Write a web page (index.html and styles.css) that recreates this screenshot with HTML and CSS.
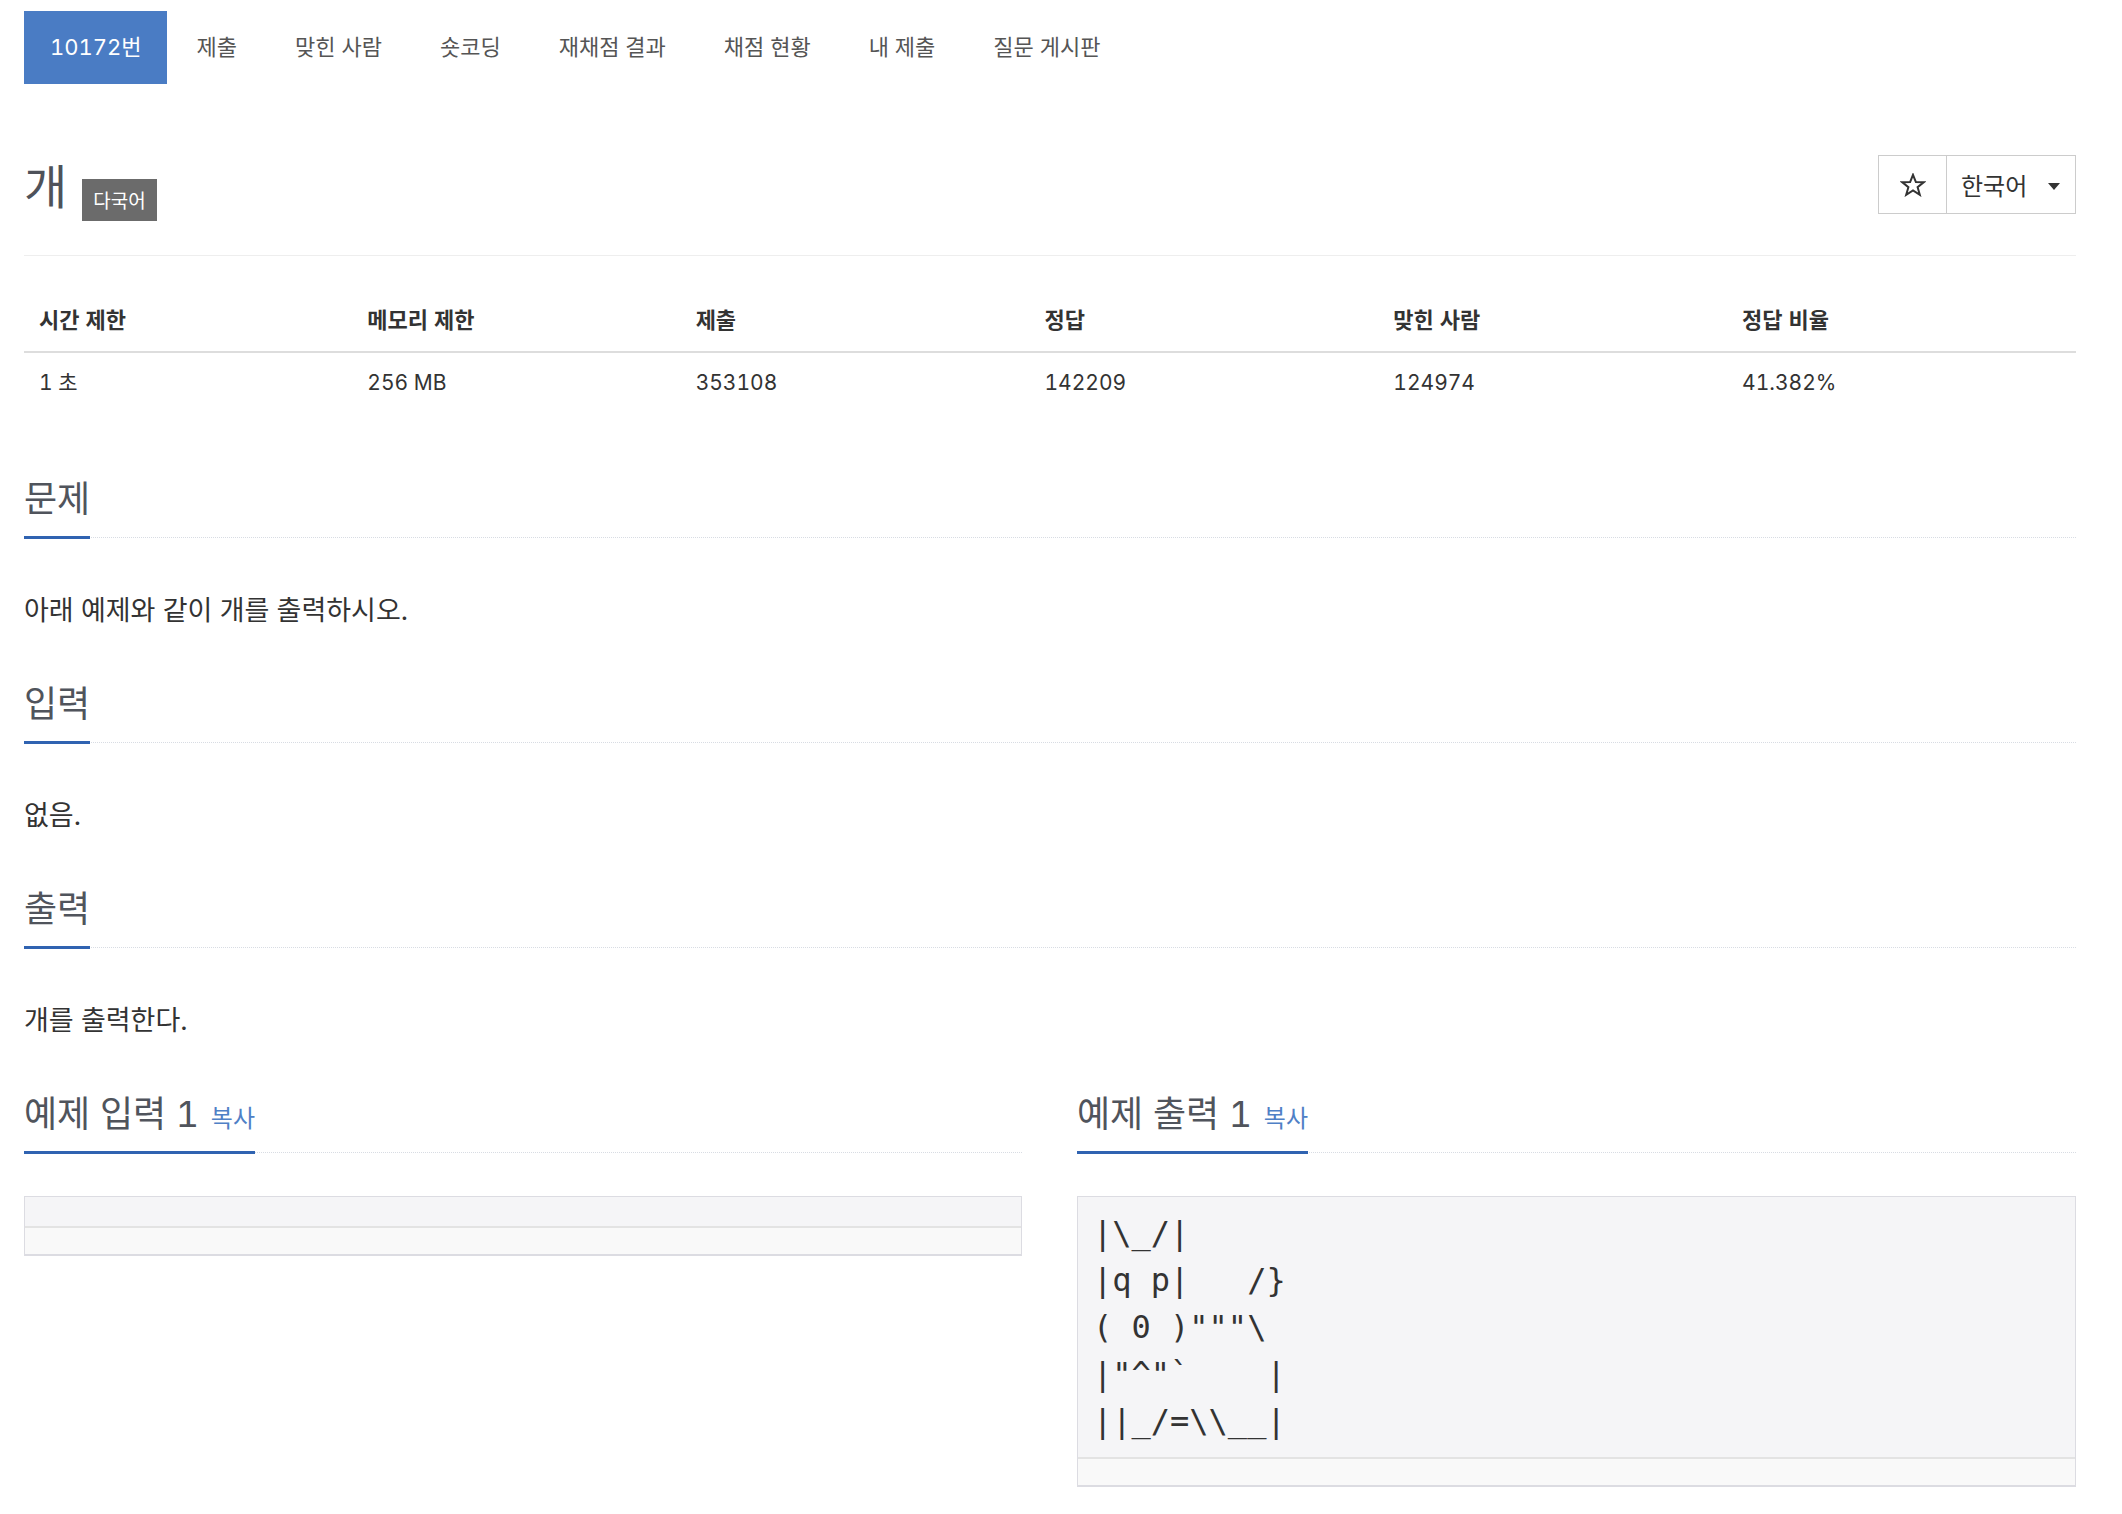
FILE: index.html
```html
<!DOCTYPE html>
<html lang="ko">
<head>
<meta charset="utf-8">
<title>10172번: 개</title>
<link rel="stylesheet" href="styles.css">
</head>
<body>
<div class="page">
  <ul class="nav">
    <li class="nav-item active"><a>10172번</a></li>
    <li class="nav-item"><a>제출</a></li>
    <li class="nav-item"><a>맞힌 사람</a></li>
    <li class="nav-item"><a>숏코딩</a></li>
    <li class="nav-item"><a>재채점 결과</a></li>
    <li class="nav-item"><a>채점 현황</a></li>
    <li class="nav-item"><a>내 제출</a></li>
    <li class="nav-item"><a>질문 게시판</a></li>
  </ul>

  <div class="page-header">
    <h1 class="title"><span class="title-text">개</span><span class="badge">다국어</span></h1>
    <div class="btn-group">
      <button class="btn btn-star" type="button" aria-label="즐겨찾기">
        <svg width="26" height="24" viewBox="0 0 26 24"><path d="M13 1.8 L15.9 9.1 L23.7 9.3 L17.6 14.2 L19.8 21.8 L13 17.4 L6.2 21.8 L8.4 14.2 L2.3 9.3 L10.1 9.1 Z" fill="none" stroke="#333" stroke-width="2" stroke-linejoin="miter"/></svg>
      </button>
      <button class="btn btn-lang" type="button">한국어<span class="caret"></span></button>
    </div>
  </div>

  <table class="info">
    <thead>
      <tr>
        <th class="c16">시간 제한</th>
        <th class="c16">메모리 제한</th>
        <th class="c17">제출</th>
        <th class="c17">정답</th>
        <th class="c17">맞힌 사람</th>
        <th class="c17">정답 비율</th>
      </tr>
    </thead>
    <tbody>
      <tr>
        <td>1 초</td>
        <td>256 MB</td>
        <td>353108</td>
        <td>142209</td>
        <td>124974</td>
        <td>41.382%</td>
      </tr>
    </tbody>
  </table>

  <section class="section">
    <div class="headline"><h2>문제</h2></div>
    <p class="text">아래 예제와 같이 개를 출력하시오.</p>
  </section>

  <section class="section">
    <div class="headline"><h2>입력</h2></div>
    <p class="text">없음.</p>
  </section>

  <section class="section">
    <div class="headline"><h2>출력</h2></div>
    <p class="text">개를 출력한다.</p>
  </section>

  <div class="samples">
    <section class="section sample">
      <div class="headline"><h2>예제 입력 1 <a class="copy">복사</a></h2></div>
      <div class="sample-box">
        <pre class="sampledata empty"></pre>
        <div class="scroll-track"></div>
      </div>
    </section>
    <section class="section sample">
      <div class="headline"><h2>예제 출력 1 <a class="copy">복사</a></h2></div>
      <div class="sample-box">
        <pre class="sampledata">|\_/|
|q p|   /}
( 0 )"""\
|"^"`    |
||_/=\\__|</pre>
        <div class="scroll-track"></div>
      </div>
    </section>
  </div>
</div>
</body>
</html>
```

FILE: styles.css
```css
* { box-sizing: border-box; }

html, body {
  margin: 0;
  padding: 0;
  background: #fff;
}

body {
  font-family: "Inter", "Noto Sans CJK KR", sans-serif;
  font-variant-numeric: tabular-nums;
  color: #333;
  font-size: 22px;
}

.page {
  width: 2052px;
  margin-left: 24px;
  padding-top: 11px;
}

/* nav */
.nav {
  list-style: none;
  margin: 0;
  padding: 0;
  display: flex;
  gap: 2px;
}

.nav-item a {
  display: block;
  height: 73px;
  line-height: 73px;
  padding: 0 28px;
  font-size: 22px;
  color: #555;
}

.nav-item.active a {
  padding: 0 25px 0 26px;
  background: #4a7cc4;
  color: #fff;
}

/* header */
.page-header {
  display: flex;
  justify-content: space-between;
  align-items: flex-start;
  padding-top: 71px;
  padding-bottom: 38px;
  border-bottom: 1px solid #eee;
}

.title {
  margin: 4px 0 0 0;
  display: flex;
  align-items: baseline;
  gap: 15px;
  font-family: "Noto Sans CJK KR", sans-serif;
  font-size: 47px;
  line-height: 50px;
  font-weight: 400;
  color: #4e525a;
}

.badge {
  display: inline-block;
  position: relative;
  top: 4px;
  font-size: 19px;
  line-height: 20px;
  padding: 11px 11px;
  background: #6b6b6b;
  color: #fff;
}

.btn-group {
  display: flex;
  height: 59px;
}

.btn {
  font-family: "Noto Sans CJK KR", sans-serif;
  background: #fff;
  border: 1px solid #ccc;
  margin: 0;
  height: 59px;
  color: #333;
  font-size: 22px;
  display: flex;
  align-items: center;
}

.btn-star {
  width: 69px;
  justify-content: center;
  padding: 0;
}

.btn-lang {
  width: 130px;
  margin-left: -1px;
  padding: 0 14px 0 14px;
  font-size: 24px;
}

.caret {
  display: inline-block;
  width: 0;
  height: 0;
  margin-left: 21px;
  margin-top: 3px;
  border-top: 7px solid #333;
  border-left: 6.5px solid transparent;
  border-right: 6.5px solid transparent;
}

/* table */
.info {
  width: 100%;
  margin-top: 36px;
  border-collapse: collapse;
  table-layout: fixed;
}

.c16 { width: 16%; }
.c17 { width: 17%; }

.info th, .info td {
  text-align: left;
  padding: 15px 15px;
  line-height: 30px;
  font-size: 22px;
  color: #333;
}

.info td {
  font-size: 21px;
}

.info th {
  font-weight: 700;
  padding-top: 13px;
  padding-bottom: 16px;
  border-bottom: 2px solid #ddd;
}

/* sections */
.section {
  margin-top: 50px;
}

.info + .section {
  margin-top: 62px;
}

.headline {
  border-bottom: 1px dotted #d8dce3;
  margin-bottom: 54px;
}

.headline h2 {
  display: inline-block;
  margin: 0 0 -2px 0;
  padding-top: 4px;
  padding-bottom: 17px;
  border-bottom: 3px solid #3063b1;
  font-size: 36px;
  line-height: 40px;
  font-weight: 400;
  color: #50545c;
}

.copy {
  margin-left: 2px;
  font-size: 24px;
  line-height: 1;
  color: #4f80c6;
}

.text {
  margin: 0;
  font-size: 27px;
  line-height: 38px;
  color: #333;
}

/* samples */
.samples {
  display: grid;
  grid-template-columns: 998px 999px;
  column-gap: 55px;
  margin-top: 50px;
}

.samples .section {
  margin-top: 0;
}

.sample .headline {
  margin-bottom: 43px;
}

.sample-box {
  border: 1px solid #dcdce2;
  border-bottom: 2px solid #dcdce2;
  background: #f5f5f7;
}

.sampledata {
  margin: 0;
  padding: 13px 15px 12px 15px;
  font-family: "DejaVu Sans Mono", monospace;
  font-size: 32px;
  line-height: 47px;
  color: #333;
}

.sampledata.empty {
  min-height: 29px;
}

.scroll-track {
  height: 28px;
  background: #f9f9f9;
  border-top: 2px solid #e3e3e3;
}
```
